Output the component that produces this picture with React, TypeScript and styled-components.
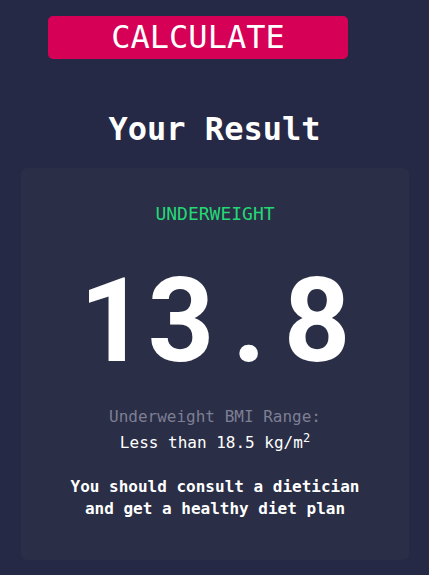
import React from "react";
import styled, { createGlobalStyle } from "styled-components";

const GlobalStyle = createGlobalStyle`
  html, body {
    margin: 0;
    padding: 0;
    background: #ffffff;
  }
  * { box-sizing: border-box; }
`;

const mono = `"DejaVu Sans Mono", "Liberation Mono", monospace`;

const Page = styled.div`
  width: 429px;
  height: 575px;
  background: #252945;
  display: flex;
  flex-direction: column;
  font-family: ${mono};
  color: #ffffff;
`;

const ButtonRow = styled.div`
  display: flex;
  padding: 16px 0 0 48px;
`;

const CalcButton = styled.button`
  width: 300px;
  height: 43px;
  border: none;
  border-radius: 5px;
  background: #d60056;
  color: #ffffff;
  font-family: ${mono};
  font-size: 32px;
  font-weight: 400;
  line-height: 43px;
  padding: 0;
  display: flex;
  align-items: center;
  justify-content: center;
  cursor: pointer;
`;

const Heading = styled.h1`
  margin: 51px 0 0;
  font-size: 32px;
  font-weight: 700;
  line-height: 38px;
  text-align: center;
`;

const Card = styled.section`
  margin: 20px 20px 0 21px;
  height: 392px;
  border-radius: 6px;
  background: #2a2e46;
  display: flex;
  flex-direction: column;
  align-items: center;
  padding-top: 35px;
`;

const Status = styled.p`
  margin: 0;
  font-size: 18px;
  line-height: 22px;
  color: #24d876;
`;

const Score = styled.p`
  margin: 38px 0 0;
  font-family: Roboto, "Liberation Sans", sans-serif;
  font-size: 116px;
  font-weight: 700;
  line-height: 116px;
  white-space: nowrap;
`;

const Cell = styled.span`
  display: inline-block;
  width: 0.587em;
  text-align: center;
`;

const Range = styled.div`
  margin-top: 25px;
  display: flex;
  flex-direction: column;
  align-items: center;
  font-size: 16px;
  line-height: 26px;
`;

const RangeLabel = styled.span`
  color: #7d7f94;
`;

const RangeValue = styled.span`
  color: #ffffff;
`;

const Sup = styled.sup`
  font-size: 12px;
  line-height: 0;
  vertical-align: 6px;
`;

const Advice = styled.p`
  margin: 20px 0 0;
  font-size: 16px;
  font-weight: 700;
  line-height: 22px;
  text-align: center;
`;

export default function App() {
  const bmi = "13.8";
  return (
    <>
      <GlobalStyle />
      <Page>
        <ButtonRow>
          <CalcButton>CALCULATE</CalcButton>
        </ButtonRow>
        <Heading>Your Result</Heading>
        <Card>
          <Status>UNDERWEIGHT</Status>
          <Score>
            {bmi.split("").map((c, i) => (
              <Cell key={i}>{c}</Cell>
            ))}
          </Score>
          <Range>
            <RangeLabel>Underweight BMI Range:</RangeLabel>
            <RangeValue>
              Less than 18.5 kg/m<Sup>2</Sup>
            </RangeValue>
          </Range>
          <Advice>
            You should consult a dietician
            <br />
            and get a healthy diet plan
          </Advice>
        </Card>
      </Page>
    </>
  );
}
